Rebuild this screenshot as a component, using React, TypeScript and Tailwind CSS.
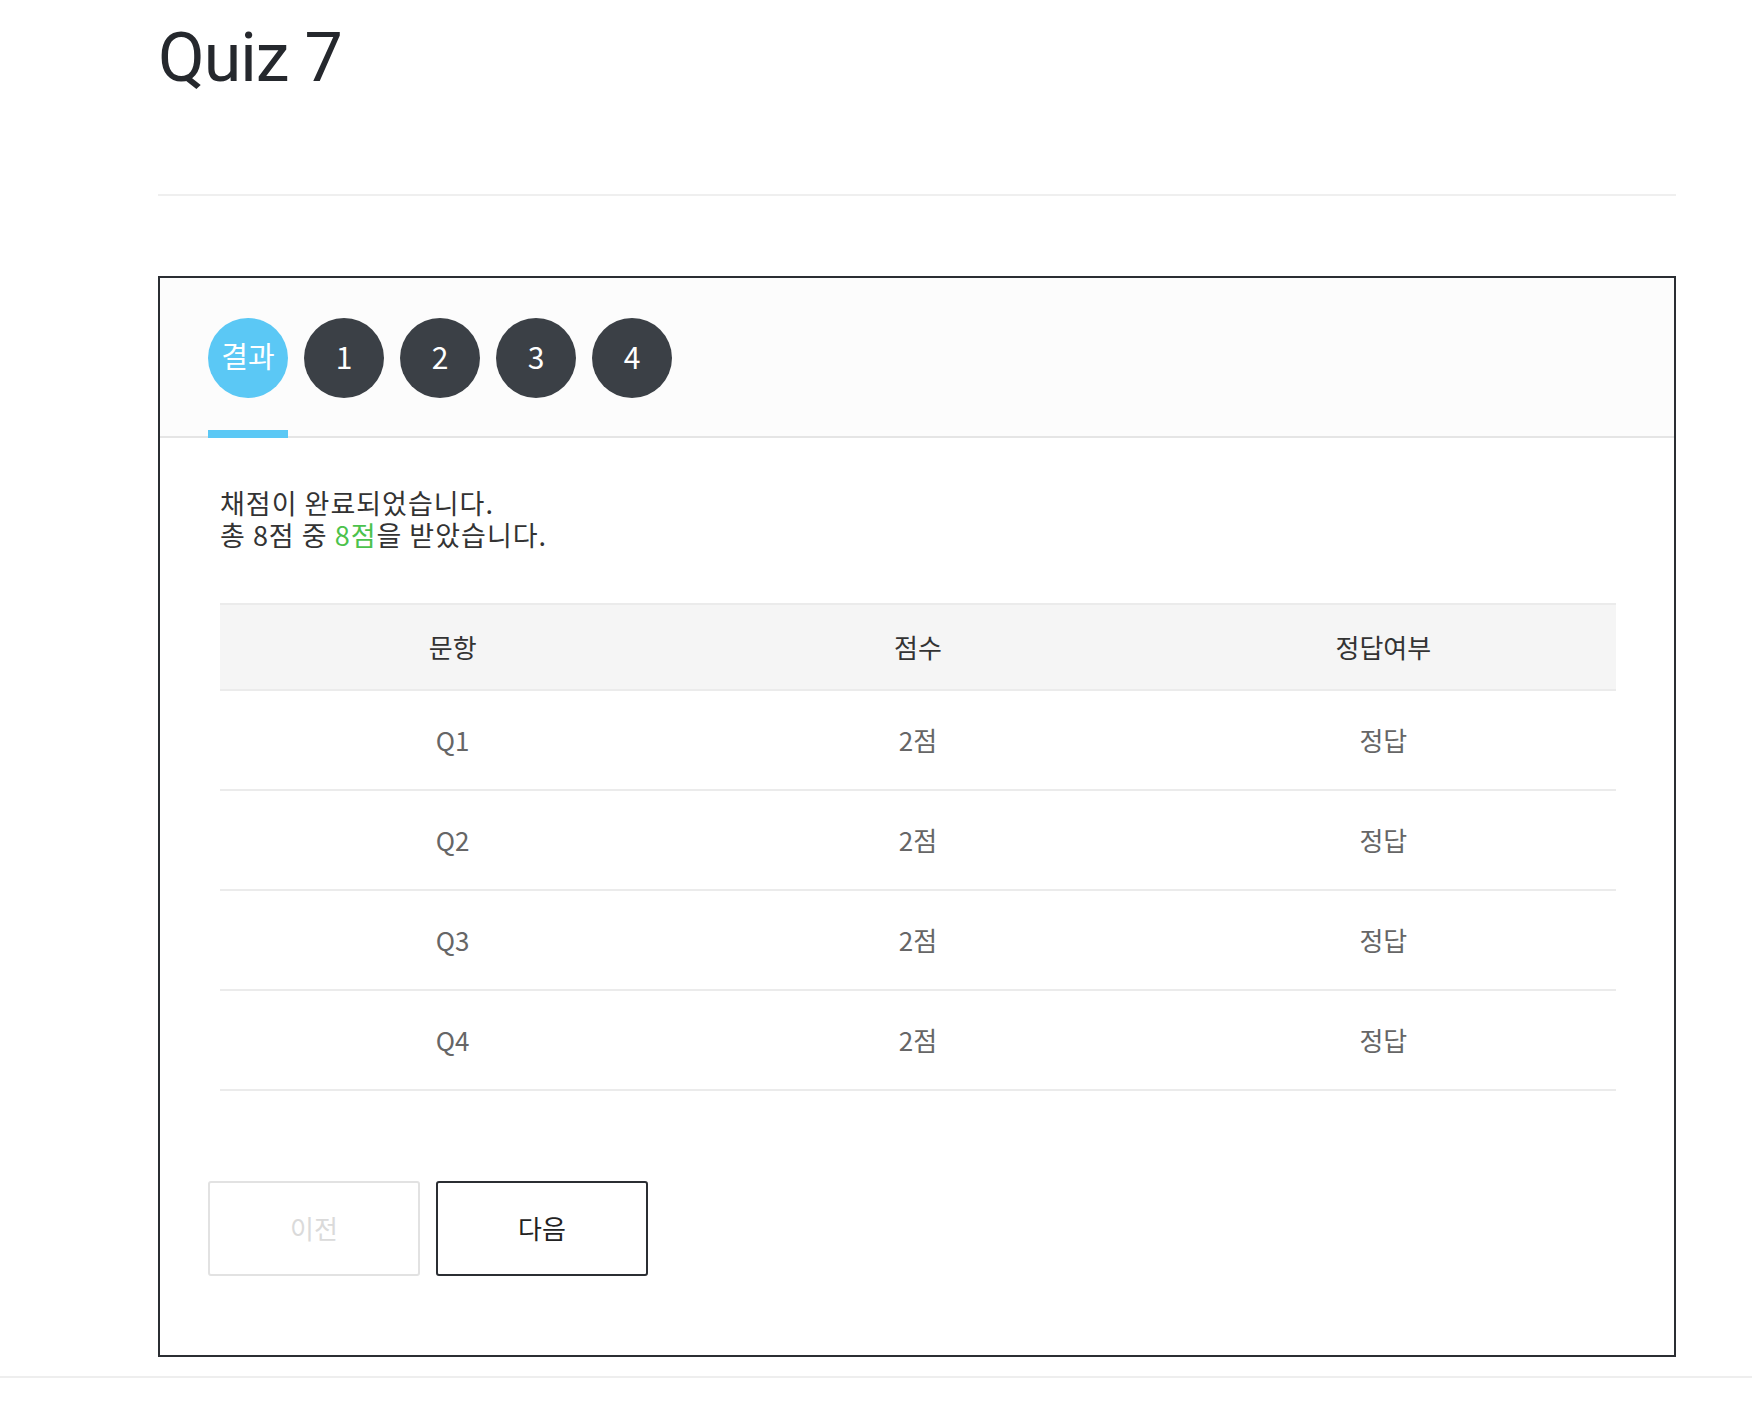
const font = "font-['Noto_Sans_CJK_KR','Noto_Sans',sans-serif]";

const tabs = ["결과", "1", "2", "3", "4"];

const rows = [
	{ q: "Q1", score: "2점", result: "정답" },
	{ q: "Q2", score: "2점", result: "정답" },
	{ q: "Q3", score: "2점", result: "정답" },
	{ q: "Q4", score: "2점", result: "정답" },
];

const Tab = (props: { label: string; active?: boolean }) => (
	<div className="flex flex-col items-center w-20">
		<div
			className={`w-20 h-20 rounded-full flex items-center justify-center pb-[5px] text-white leading-none ${
				props.active ? "bg-[#5bc8f5] text-[29px]" : "bg-[#3b4046] text-[30px]"
			}`}
		>
			{props.label}
		</div>
		<div
			className={`mt-8 h-2 w-20 relative z-10 -mb-[2px] ${
				props.active ? "bg-[#5bc8f5]" : "bg-transparent"
			}`}
		/>
	</div>
);

const ResultTable = () => (
	<div className="ml-3 mr-[10px] mt-[52px] border-b-2 border-[#ebebeb]">
		<div className="grid grid-cols-3 h-[86px] items-center pb-[1px] border-t-2 border-[#ebebeb] bg-[#f5f5f5] text-[#333] text-[26px] text-center">
			<div>문항</div>
			<div>점수</div>
			<div>정답여부</div>
		</div>
		{rows.map((r) => (
			<div
				key={r.q}
				className="grid grid-cols-3 h-[100px] items-center pb-[1px] border-t-2 border-[#ebebeb] text-[#666] text-[26px] text-center"
			>
				<div>{r.q}</div>
				<div>{r.score}</div>
				<div>{r.result}</div>
			</div>
		))}
	</div>
);

export default function App() {
	return (
		<div className={`min-h-screen bg-white ${font}`}>
			<div className="ml-[158px] w-[1518px] pt-[18px]">
				<h1 className="font-['Roboto','Noto_Sans_CJK_KR',sans-serif] text-[68px] leading-[80px] tracking-[-1px] text-[#25282d]">
					Quiz 7
				</h1>
				<div className="mt-24 h-[2px] bg-[#efefef]" />

				<section className="mt-20 border-2 border-[#2b2e33]">
					<div className="bg-[#fcfcfc] border-b-2 border-[#e5e5e5] px-12 pt-10">
						<div className="flex gap-4">
							{tabs.map((t, i) => (
								<Tab key={t} label={t} active={i === 0} />
							))}
						</div>
					</div>

					<div className="px-12 pt-[49px] pb-[79px]">
						<div className="ml-3 text-[27px] leading-[32px] tracking-[1px] text-[#333]">
							<p>채점이 완료되었습니다.</p>
							<p>
								총 8점 중 <span className="text-[#4cc24c]">8점</span>을 받았습니다.
							</p>
						</div>

						<ResultTable />

						<div className="mt-[90px] flex gap-4">
							<button className="w-[212px] h-[95px] rounded-[3px] border-2 border-[#e2e2e2] bg-white pb-[3px] text-[26px] text-[#dadada]">
								이전
							</button>
							<button className="w-[212px] h-[95px] rounded-[3px] border-2 border-[#2b2e33] bg-white pb-[3px] text-[26px] text-[#222]">
								다음
							</button>
						</div>
					</div>
				</section>
			</div>
			<div className="mt-[19px] h-[2px] bg-[#eeeeee]" />
		</div>
	);
}
